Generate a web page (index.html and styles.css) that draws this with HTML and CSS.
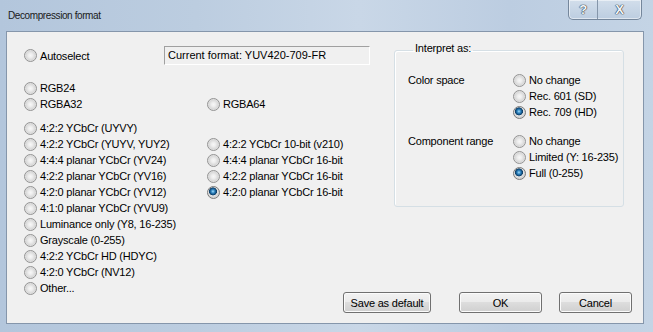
FILE: index.html
```html
<!DOCTYPE html>
<html>

<head>
  <meta http-equiv="Content-Type" content="text/html; charset=UTF-8" />
  <title>Decompression format</title>
  <link rel="stylesheet" href="styles.css">
</head>

<body>
  <div class="window">
    <div class="titlebar">
      <span class="caption">Decompression format</span>
      <div class="caption-buttons">
        <span class="cbtn help">?</span>
        <span class="cbtn close">X</span>
      </div>
    </div>

    <div class="client">
      <div class="formats">
        <div class="auto-row">
          <label class="radio auto"><span class="mark"></span>Autoselect</label>
          <div class="current">Current format: YUV420-709-FR</div>
        </div>

        <!-- RGB formats -->
        <div class="format-block rgb">
          <div class="col">
            <label class="radio"><span class="mark"></span>RGB24</label>
            <label class="radio"><span class="mark"></span>RGBA32</label>
          </div>
          <div class="col offset">
            <label class="radio"><span class="mark"></span>RGBA64</label>
          </div>
        </div>

        <!-- YCbCr formats -->
        <div class="format-block yuv">
          <div class="col">
            <label class="radio"><span class="mark"></span>4:2:2 YCbCr (UYVY)</label>
            <label class="radio"><span class="mark"></span>4:2:2 YCbCr (YUYV, YUY2)</label>
            <label class="radio"><span class="mark"></span>4:4:4 planar YCbCr (YV24)</label>
            <label class="radio"><span class="mark"></span>4:2:2 planar YCbCr (YV16)</label>
            <label class="radio"><span class="mark"></span>4:2:0 planar YCbCr (YV12)</label>
            <label class="radio"><span class="mark"></span>4:1:0 planar YCbCr (YVU9)</label>
            <label class="radio"><span class="mark"></span>Luminance only (Y8, 16-235)</label>
            <label class="radio"><span class="mark"></span>Grayscale (0-255)</label>
            <label class="radio"><span class="mark"></span>4:2:2 YCbCr HD (HDYC)</label>
            <label class="radio"><span class="mark"></span>4:2:0 YCbCr (NV12)</label>
            <label class="radio"><span class="mark"></span>Other...</label>
          </div>
          <div class="col offset">
            <label class="radio"><span class="mark"></span>4:2:2 YCbCr 10-bit (v210)</label>
            <label class="radio"><span class="mark"></span>4:4:4 planar YCbCr 16-bit</label>
            <label class="radio"><span class="mark"></span>4:2:2 planar YCbCr 16-bit</label>
            <label class="radio"><span class="mark on"></span>4:2:0 planar YCbCr 16-bit</label>
          </div>
        </div>
      </div>

      <fieldset class="interpret">
        <legend>Interpret as:</legend>
        <div class="ig-row">
          <div class="ig-label">Color space</div>
          <div class="ig-options">
            <label class="radio"><span class="mark"></span>No change</label>
            <label class="radio"><span class="mark"></span>Rec. 601 (SD)</label>
            <label class="radio"><span class="mark on"></span>Rec. 709 (HD)</label>
          </div>
        </div>
        <div class="ig-row range">
          <div class="ig-label">Component range</div>
          <div class="ig-options">
            <label class="radio"><span class="mark"></span>No change</label>
            <label class="radio"><span class="mark"></span>Limited (Y: 16-235)</label>
            <label class="radio"><span class="mark on"></span>Full (0-255)</label>
          </div>
        </div>
      </fieldset>

      <div class="buttons">
        <button class="btn save">Save as default</button>
        <button class="btn ok">OK</button>
        <button class="btn cancel">Cancel</button>
      </div>
    </div>
  </div>
</body>

</html>
```

FILE: styles.css
```css
html {
  height: 100%;
}

body {
  margin: 0;
  font-family: "Liberation Sans", Arial, sans-serif;
  font-size: 11px;
  letter-spacing: -0.2px;
  color: #000;
}

/* Window frame (Aero style) */
.window {
  width: 653px;
  height: 332px;
  display: flex;
  flex-direction: column;
  background: linear-gradient(90deg, #b3c6dc 0%, #bccde0 30%, #c9d7e7 55%, #bccde1 78%, #c4d4e5 100%);
  overflow: hidden;
}

.titlebar {
  height: 31px;
  display: flex;
  align-items: flex-start;
  flex: none;
}

.caption {
  margin: 10px 0 0 8px;
  font-size: 10px;
  line-height: 12px;
  letter-spacing: -0.4px;
  color: #1a1a1a;
}

.caption-buttons {
  display: flex;
  margin-left: auto;
  margin-right: 11px;
  height: 20px;
  border: 1px solid #75879c;
  border-top: none;
  border-radius: 0 0 5px 5px;
  background: linear-gradient(#d2deeb, #bccde0);
  box-shadow: inset 0 0 0 1px rgba(255, 255, 255, 0.5);
  box-sizing: border-box;
}

.cbtn {
  display: flex;
  align-items: center;
  justify-content: center;
  font-weight: bold;
  font-size: 13px;
  color: #f4f6f8;
  text-shadow: 0 0 1px #2b3948, 0 0 1px #2b3948, 0 0 1px #2b3948;
}

.cbtn.help {
  width: 28px;
}

.cbtn.close {
  width: 43px;
  border-left: 1px solid #8596aa;
}

/* Client area */
.client {
  height: 293px;
  margin: 0 9px 0 6px;
  box-sizing: border-box;
  border: 1px solid #8596ab;
  background-color: #f0f0f0;
  display: grid;
  grid-template-columns: 336px 1fr;
  grid-template-rows: 1fr auto;
  grid-template-areas:
    "formats interpret"
    "formats buttons";
}

.formats {
  grid-area: formats;
  padding: 14px 0 0 17px;
}

.auto-row {
  display: flex;
  align-items: center;
  height: 19px;
}

.radio {
  display: flex;
  align-items: center;
  gap: 3px;
  height: 16px;
  line-height: 16px;
  white-space: nowrap;
}

.radio.auto {
  width: 140px;
  flex: none;
}

.mark {
  flex: none;
  width: 13px;
  height: 13px;
  box-sizing: border-box;
  border-radius: 50%;
  border: 1px solid #939393;
  background: radial-gradient(circle at 50% 50%, #f7f7f7 0, #eeeeee 2px, #d9d9d9 4.5px, #e9e9e9 6px);
}

.mark.on {
  border-color: #7a7a7a;
  background: radial-gradient(circle at 45% 40%, #a9def9 0, #3d92cb 1.5px, #175c92 2.8px, #0e3d64 3.7px, #e6e6e6 4.3px, #d6d6d6 5.5px);
}

.current {
  flex: none;
  width: 206px;
  height: 19px;
  box-sizing: border-box;
  border: 1px solid;
  border-color: #a0a0a0 #ffffff #ffffff #a0a0a0;
  padding-left: 3px;
  line-height: 17px;
  letter-spacing: 0;
  white-space: nowrap;
}

.format-block {
  display: flex;
}

.format-block.rgb {
  margin-top: 15px;
}

.format-block.yuv {
  margin-top: 8px;
}

.col {
  flex: none;
  width: 183px;
}

.col.offset {
  padding-top: 16px;
}

/* Interpret as group box */
.interpret {
  grid-area: interpret;
  align-self: start;
  margin: 10px 0 0 51px;
  width: 230px;
  box-sizing: border-box;
  padding: 14px 0 25px 13px;
  border: 1px solid #d5dfe5;
  border-radius: 3px;
  box-shadow: inset 1px 1px 0 #ffffff;
  min-width: 0;
}

.interpret legend {
  margin-left: 5px;
  padding: 0 2px 4px;
  line-height: 12px;
}

.ig-row {
  display: flex;
}

.ig-row.range {
  margin-top: 13px;
}

.ig-label {
  width: 105px;
  line-height: 16px;
  flex: none;
}

/* Dialog buttons */
.buttons {
  grid-area: buttons;
  display: flex;
  padding: 0 11px 10px 0;
}

.btn {
  height: 21px;
  padding: 0;
  font-family: inherit;
  font-size: 11px;
  letter-spacing: -0.2px;
  color: #000;
  border: 1px solid #707070;
  border-radius: 3px;
  background: linear-gradient(#f2f2f2 0%, #ebebeb 45%, #dddddd 50%, #cfcfcf 100%);
  box-shadow: inset 0 0 0 1px #fbfbfb;
}

.btn.save {
  width: 88px;
}

.btn.ok {
  width: 83px;
  margin-left: 28px;
}

.btn.cancel {
  width: 73px;
  margin-left: 17px;
}
```
